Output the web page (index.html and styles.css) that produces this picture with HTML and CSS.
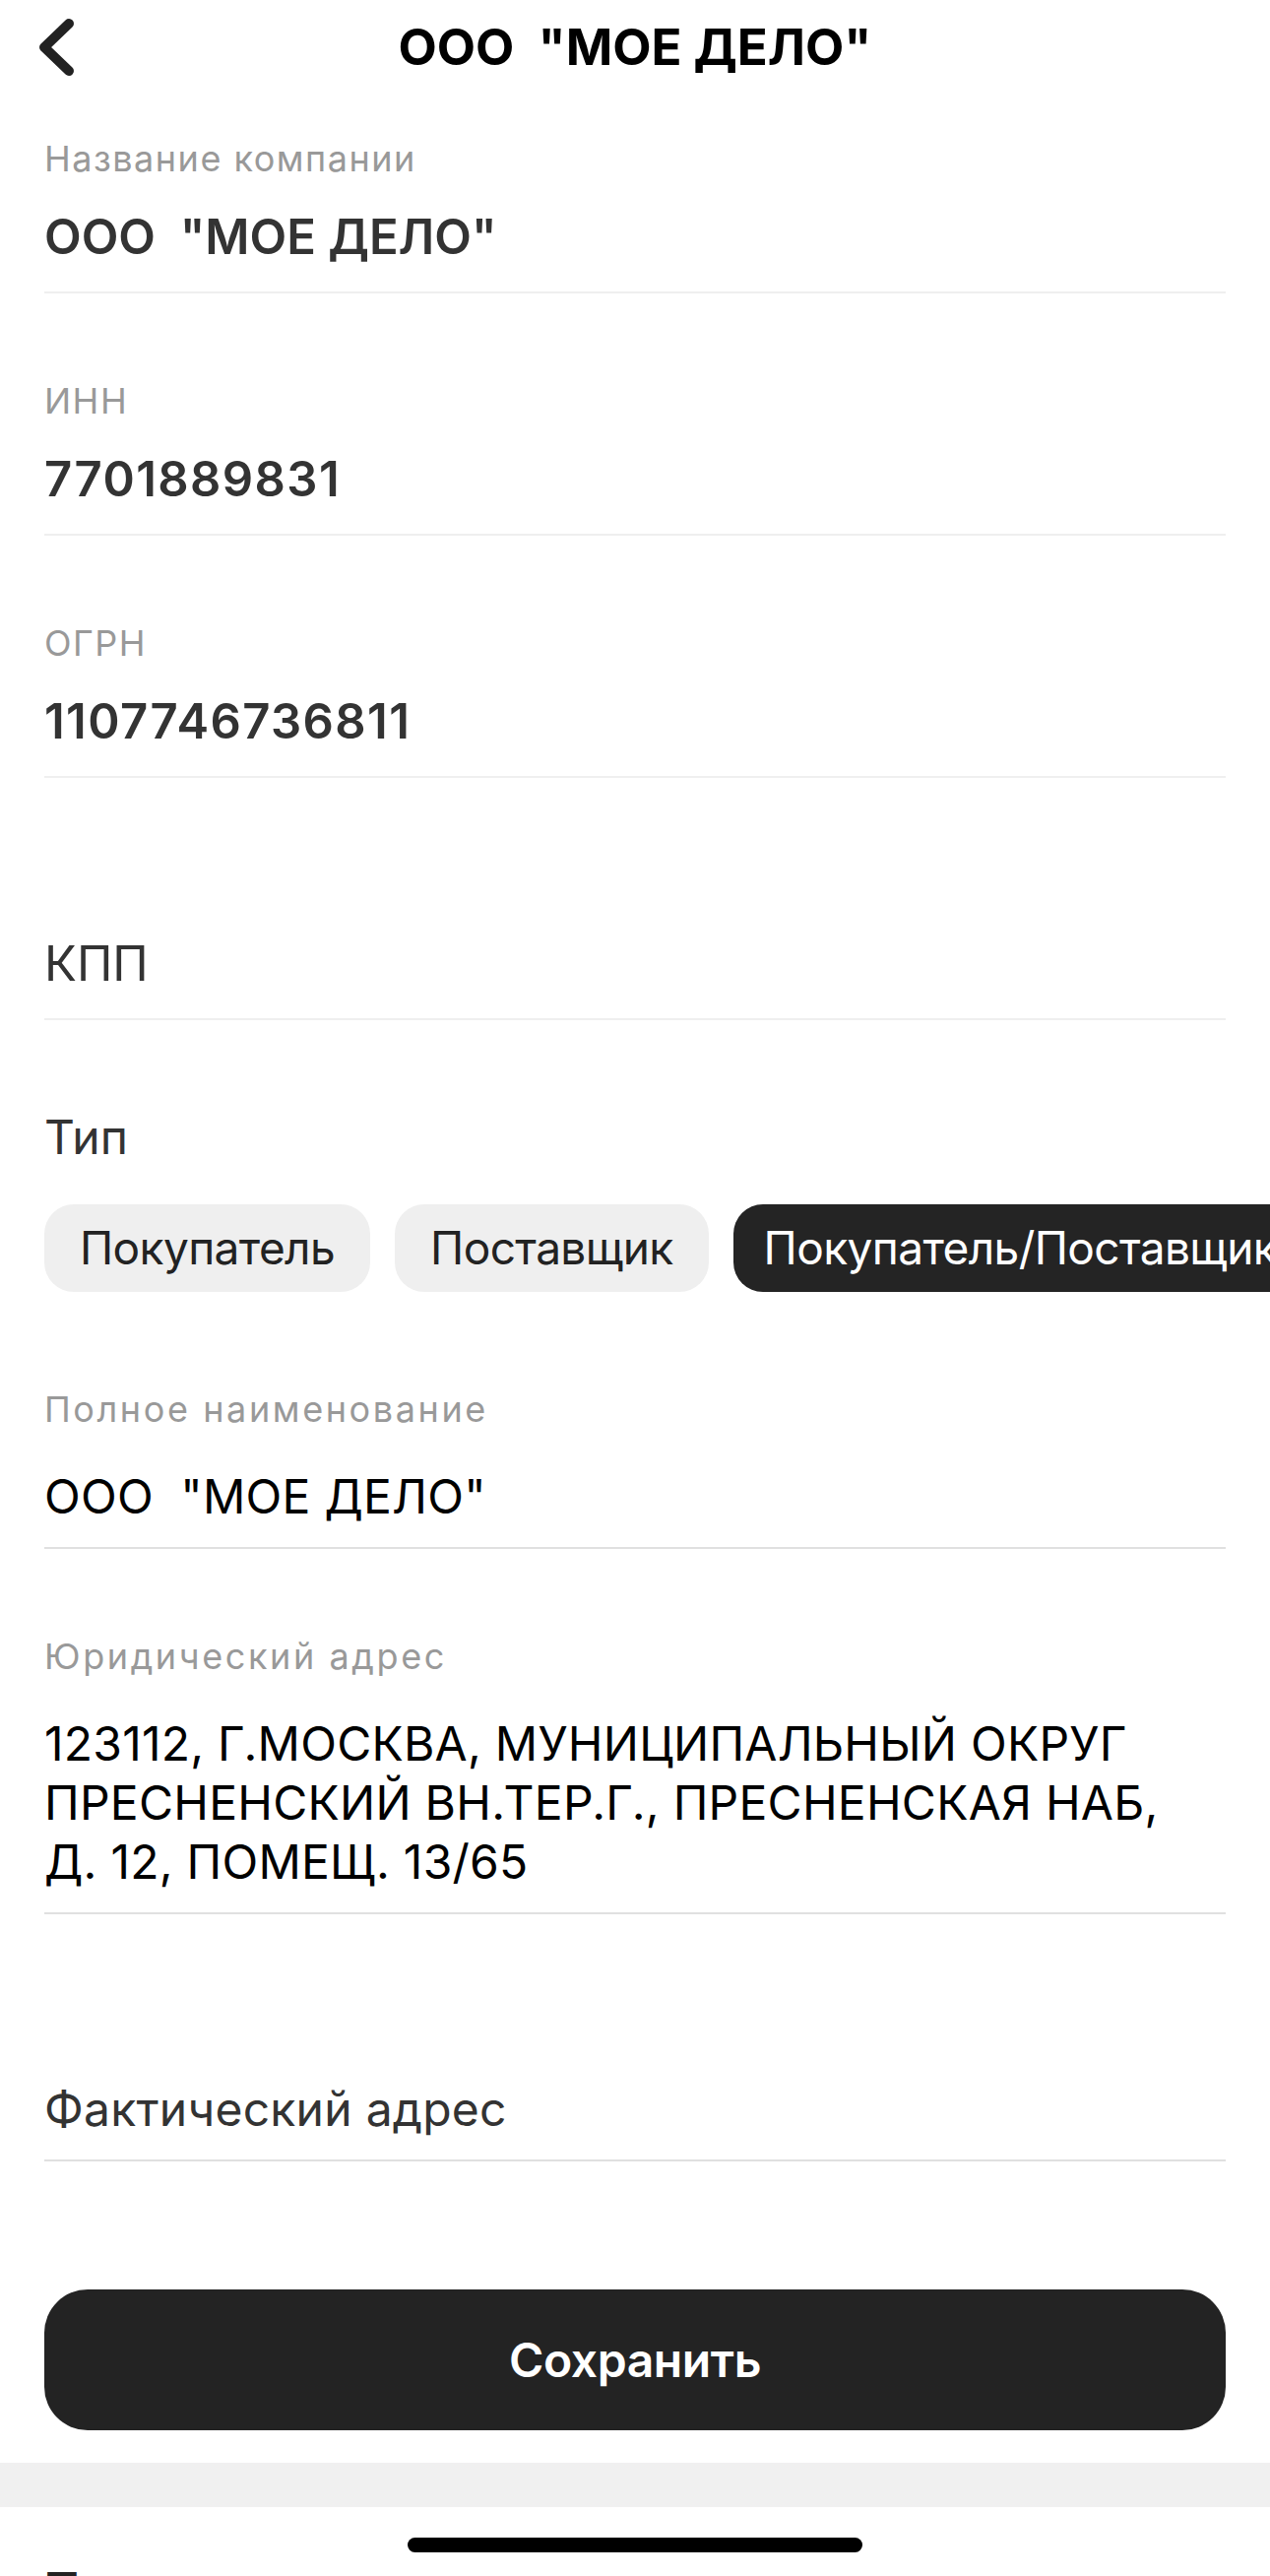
FILE: index.html
```html
<!DOCTYPE html>
<html lang="ru">
<head>
<meta charset="utf-8">
<title>ООО "МОЕ ДЕЛО"</title>
<link rel="stylesheet" href="styles.css">
</head>
<body>
<div class="page">
  <header class="header">
    <div class="back">
      <svg class="back-icon" width="40" height="60" viewBox="0 0 40 60" aria-hidden="true">
        <polyline points="32,6 7,30 32,54" fill="none" stroke="#222" stroke-width="10" stroke-linecap="round" stroke-linejoin="round"/>
      </svg>
    </div>
    <h1 class="title">ООО  "МОЕ ДЕЛО"</h1>
    <div></div>
  </header>

  <main class="form">
    <div class="field first">
      <div class="label">Название компании</div>
      <div class="value">ООО  "МОЕ ДЕЛО"</div>
    </div>
    <div class="field">
      <div class="label">ИНН</div>
      <div class="value digits">7701889831</div>
    </div>
    <div class="field">
      <div class="label">ОГРН</div>
      <div class="value digits">1107746736811</div>
    </div>
    <div class="field">
      <div class="label"></div>
      <div class="value placeholder">КПП</div>
    </div>

    <section class="type">
      <div class="type-title">Тип</div>
      <div class="chips">
        <div class="chip">Покупатель</div>
        <div class="chip">Поставщик</div>
        <div class="chip active">Покупатель/Поставщик</div>
      </div>
    </section>

    <div class="field lower after-type">
      <div class="label">Полное наименование</div>
      <div class="value">ООО  "МОЕ ДЕЛО"</div>
    </div>
    <div class="field lower">
      <div class="label">Юридический адрес</div>
      <div class="value">123112, Г.МОСКВА, МУНИЦИПАЛЬНЫЙ ОКРУГ<br>ПРЕСНЕНСКИЙ ВН.ТЕР.Г., ПРЕСНЕНСКАЯ НАБ,<br>Д. 12, ПОМЕЩ. 13/65</div>
    </div>
    <div class="field lower">
      <div class="label"></div>
      <div class="value placeholder">Фактический адрес</div>
    </div>

    <button class="save" type="button">Сохранить</button>
  </main>

  <div class="band"></div>
  <div class="next-title">Представители</div>
  <div class="home-indicator"></div>
</div>
</body>
</html>
```

FILE: styles.css
```css
* {
  box-sizing: border-box;
  margin: 0;
  padding: 0;
}

html, body {
  width: 1290px;
  height: 2616px;
  overflow: hidden;
  background: #ffffff;
}

body {
  font-family: Inter, "Noto Sans", sans-serif;
  color: #000;
}

.page {
  position: relative;
  height: 2616px;
  overflow: hidden;
}

.header {
  height: 95px;
  display: grid;
  grid-template-columns: 1fr auto 1fr;
  align-items: center;
}

.back {
  padding-left: 38px;
  display: flex;
  align-items: center;
}

.back-icon {
  display: block;
}

.title {
  font-size: 51px;
  font-weight: 700;
  line-height: 95px;
  letter-spacing: 0;
  white-space: pre;
  color: #000;
}

.form {
  padding: 0 45px;
  display: flex;
  flex-direction: column;
}

.form > * {
  flex: none;
}

.field {
  padding-top: 87px;
  padding-bottom: 27px;
  border-bottom: 2px solid #efefef;
}

.field.first {
  padding-top: 44px;
}

.label {
  height: 44px;
  font-size: 36px;
  line-height: 44px;
  color: #999999;
  letter-spacing: 1.5px;
  white-space: nowrap;
}

.value {
  margin-top: 30px;
  font-size: 49px;
  line-height: 56px;
  font-weight: 600;
  color: #333333;
  white-space: pre;
  letter-spacing: 0;
}

.value.digits {
  letter-spacing: 1.4px;
}

.value.placeholder {
  font-weight: 400;
  color: #333333;
}

.field.lower {
  padding-bottom: 21px;
  border-bottom-color: #e0e0e0;
}

.field.lower .label {
  letter-spacing: 2.6px;
}

.field.lower.after-type {
  padding-top: 97px;
}

.field.lower .value {
  margin-top: 37px;
  font-size: 48px;
  line-height: 60px;
  font-weight: 400;
  color: #000;
  letter-spacing: 0.25px;
}

.field.lower .value.placeholder {
  color: #333333;
}

.type {
  padding-top: 91px;
}

.type-title {
  font-size: 48px;
  line-height: 56px;
  color: #333333;
  letter-spacing: 0;
}

.chips {
  margin-top: 40px;
  margin-right: -45px;
  display: flex;
  gap: 25px;
  overflow: hidden;
}

.chip {
  flex: none;
  height: 89px;
  padding: 0 36px;
  border-radius: 30px;
  background: #efefef;
  color: #222222;
  font-size: 46px;
  line-height: 89px;
  letter-spacing: -0.6px;
  white-space: nowrap;
}

.chip.active {
  background: #242424;
  color: #ffffff;
  padding: 0 31px;
}

.save {
  display: block;
  margin-top: 130px;
  height: 143px;
  width: 100%;
  border: none;
  border-radius: 44px;
  background: #232323;
  color: #ffffff;
  font-family: Inter, "Noto Sans", sans-serif;
  font-size: 48px;
  font-weight: 600;
  letter-spacing: -0.4px;
}

.band {
  margin-top: 33px;
  height: 45px;
  background: #f0f0f0;
}

.next-title {
  margin-top: 56px;
  padding-left: 45px;
  font-size: 48px;
  line-height: 56px;
  font-weight: 700;
  color: #222222;
  white-space: nowrap;
}

.home-indicator {
  position: absolute;
  left: 414px;
  top: 2577px;
  width: 462px;
  height: 15px;
  border-radius: 8px;
  background: #000;
}
```
